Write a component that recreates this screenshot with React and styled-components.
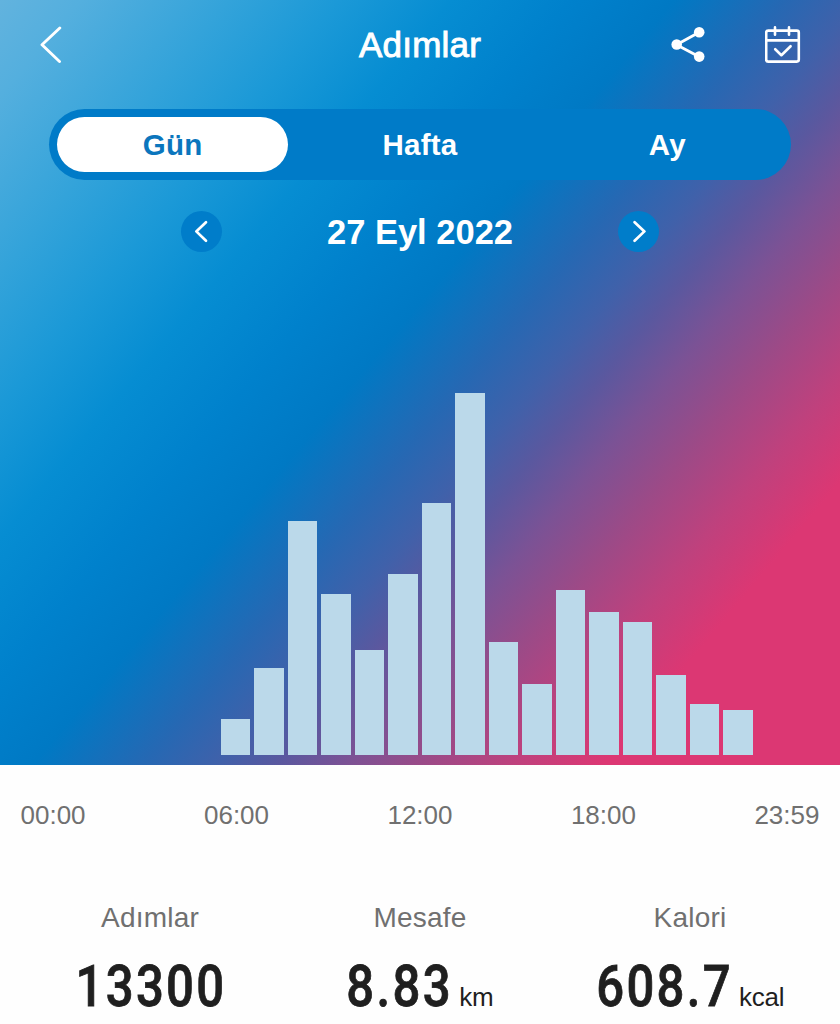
import React from "react";
import styled, { createGlobalStyle } from "styled-components";

// steps per hour, as bar heights in px
const hours = [
  0, 0, 0, 0, 0, 0, 36, 87, 234, 161, 105, 181, 252, 362, 113, 71, 165, 143,
  133, 80, 51, 45, 0, 0,
];

const tabs = ["Gün", "Hafta", "Ay"];
const times = ["00:00", "06:00", "12:00", "18:00", "23:59"];

const stats = [
  { label: "Adımlar", value: "13300" },
  { label: "Mesafe", value: "8.83", unit: "km" },
  { label: "Kalori", value: "608.7", unit: "kcal" },
];

function BackIcon() {
  return (
    <Icon width="24" height="38" viewBox="0 0 24 38" $stroke={2.9}>
      <path d="M20.8 2 3 18.8l17.5 16.7" />
    </Icon>
  );
}

function ShareIcon() {
  return (
    <Icon width="36" height="38" viewBox="0 0 36 38" $stroke={2.9}>
      <path d="M28.2 6.2 5.5 18.7l22.7 12" />
      <g fill="#fff" stroke="none">
        <circle cx="28.2" cy="6.3" r="5.3" />
        <circle cx="5.7" cy="18.5" r="5.3" />
        <circle cx="28.2" cy="30.6" r="5.3" />
      </g>
    </Icon>
  );
}

function CalendarIcon() {
  return (
    <Icon width="36" height="38" viewBox="0 0 36 38" $stroke={2.6}>
      <rect x="1.2" y="4.6" width="32.6" height="31" rx="2" />
      <path d="M2 14.4h31" />
      <path d="M10 1.4v7.4M24 1.4v7.4" />
      <path d="m10.2 23.2 6.2 6 9.2-9" />
    </Icon>
  );
}

function App() {
  return (
    <>
      <GlobalStyle />
      <Page>
        <Hero>
          <Header>
            <HeaderSide>
              <BackIcon />
            </HeaderSide>
            <Title>Adımlar</Title>
            <HeaderSide $end>
              <ShareIcon />
              <CalendarIcon />
            </HeaderSide>
          </Header>
          <TabBar>
            {tabs.map((tab, i) => (
              <Tab key={tab} $active={i === 0}>
                {tab}
              </Tab>
            ))}
          </TabBar>
          <DateRow>
            <RoundButton>
              <Icon width="16" height="24" viewBox="0 0 16 24" $stroke={2.7}>
                <path d="M12 2.2 2.3 11.4 12 20.8" />
              </Icon>
            </RoundButton>
            <DateText>27 Eyl 2022</DateText>
            <RoundButton>
              <Icon width="16" height="24" viewBox="0 0 16 24" $stroke={2.7}>
                <path d="m4.6 2.2 9.8 9.2-9.8 9.4" />
              </Icon>
            </RoundButton>
          </DateRow>
          <Chart>
            {hours.map((h, i) => (
              <Bar key={i} style={{ height: h }} />
            ))}
          </Chart>
        </Hero>
        <Axis>
          {times.map((t) => (
            <span key={t}>{t}</span>
          ))}
        </Axis>
        <Stats>
          {stats.map((s) => (
            <Stat key={s.label}>
              <StatLabel>{s.label}</StatLabel>
              <StatValue>
                <Digits $count={s.value.replace(".", "").length}>
                  {s.value}
                </Digits>
                {s.unit && <Unit>{s.unit}</Unit>}
              </StatValue>
            </Stat>
          ))}
        </Stats>
      </Page>
    </>
  );
}

export default App;

const GlobalStyle = createGlobalStyle`
  * {
    box-sizing: border-box;
  }
  body {
    margin: 0;
    background: #fff;
    font-family: "Liberation Sans", Arial, sans-serif;
  }
`;
const Page = styled.div`
  width: 840px;
  height: 1024px;
  overflow: hidden;
  background: #fefefe;
`;
const Hero = styled.div`
  display: flex;
  flex-direction: column;
  height: 765px;
  background: linear-gradient(
    130deg,
    #62b3de 0%,
    #54afde 5.5%,
    #33a3da 15.5%,
    #1b99d7 23%,
    #068dd2 30.5%,
    #0081cc 38.5%,
    #0079c4 45.5%,
    #2668b3 53%,
    #4061aa 58%,
    #5a589f 62%,
    #7b5295 66.5%,
    #9c4a87 72%,
    #bf417d 78%,
    #dc3773 84%,
    #dc3773 100%
  );
`;
const Icon = styled.svg`
  display: block;
  fill: none;
  stroke: #fff;
  stroke-width: ${(p) => p.$stroke};
  stroke-linecap: round;
  stroke-linejoin: round;
`;
const Header = styled.div`
  display: flex;
  align-items: center;
  height: 89px;
  padding: 0 39px;
`;
const HeaderSide = styled.div`
  display: flex;
  flex: 1;
  justify-content: ${(p) => (p.$end ? "flex-end" : "flex-start")};
  gap: 58px;
`;
const Title = styled.div`
  padding-top: 1px;
  color: #fff;
  font-size: 35px;
  letter-spacing: 0.2px;
  -webkit-text-stroke: 0.9px #fff;
`;
const TabBar = styled.div`
  display: flex;
  height: 71px;
  margin: 20px 49px 0;
  border-radius: 36px;
  background: #007bc8;
`;
const Tab = styled.div`
  display: flex;
  flex: 1;
  align-items: center;
  justify-content: center;
  margin: 8px;
  padding-top: 1px;
  border-radius: 28px;
  font-size: 29.5px;
  font-weight: bold;
  letter-spacing: 0.2px;
  color: ${(p) => (p.$active ? "#0b76bd" : "#fff")};
  background: ${(p) => (p.$active ? "#fff" : "transparent")};
`;
const DateRow = styled.div`
  display: flex;
  align-items: center;
  justify-content: space-between;
  height: 41px;
  margin: 31px 181px 0;
`;
const RoundButton = styled.div`
  display: flex;
  align-items: center;
  justify-content: center;
  width: 41px;
  height: 41px;
  border-radius: 50%;
  background: #007dca;
`;
const DateText = styled.div`
  padding-top: 1px;
  color: #fff;
  font-size: 34.5px;
  font-weight: bold;
`;
const Chart = styled.div`
  display: flex;
  flex: 1;
  align-items: flex-end;
  gap: 3.9px;
  padding: 0 0 10px 19.9px;
`;
const Bar = styled.div`
  flex: none;
  width: 29.6px;
  background: #bbd9ea;
`;
const Axis = styled.div`
  display: flex;
  justify-content: space-between;
  padding: 35px 20.5px 0;
  color: #707070;
  font-size: 26px;
  line-height: 30px;
`;
const Stats = styled.div`
  display: grid;
  grid-template-columns: repeat(3, 1fr);
  padding: 72px 15px 0;
`;
const Stat = styled.div`
  display: flex;
  flex-direction: column;
  align-items: center;
`;
const StatLabel = styled.div`
  color: #707070;
  font-size: 28px;
  line-height: 32px;
  letter-spacing: 0.2px;
`;
const StatValue = styled.div`
  display: flex;
  align-items: baseline;
  margin-top: 20px;
  color: #1f1f1f;
`;
// condensed digits, the negative margin gives back the squeezed width
const Digits = styled.span`
  margin-left: ${(p) => p.$count * -4.4}px;
  font-family: Roboto, sans-serif;
  font-size: 57px;
  font-weight: 500;
  line-height: 66px;
  letter-spacing: 2.7px;
  transform: scaleX(0.86);
  transform-origin: right;
  -webkit-text-stroke: 0.8px #1f1f1f;
`;
const Unit = styled.span`
  margin: 0 4px 0 6px;
  font-size: 26px;
  letter-spacing: -0.2px;
`;
